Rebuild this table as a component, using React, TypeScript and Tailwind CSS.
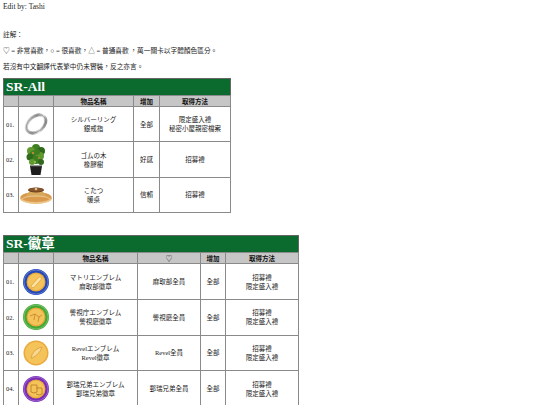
import React from "react";

const serif = "font-['Liberation_Serif','Noto_Sans_CJK_TC',serif]";

function Ring() {
  return (
    <svg width="26" height="26" viewBox="0 0 26 26">
      <defs>
        <linearGradient id="rg" x1="0" y1="0" x2="1" y2="1">
          <stop offset="0" stopColor="#f4f4f4" />
          <stop offset="0.45" stopColor="#9a9a9a" />
          <stop offset="0.7" stopColor="#e8e8e8" />
          <stop offset="1" stopColor="#555" />
        </linearGradient>
      </defs>
      <g transform="rotate(-40 13 13)">
        <ellipse cx="13" cy="13" rx="11" ry="7.5" fill="none" stroke="url(#rg)" strokeWidth="3.2" />
        <ellipse cx="13" cy="13" rx="11" ry="7.5" fill="none" stroke="#6b6b6b" strokeWidth="0.5" />
      </g>
    </svg>
  );
}

function Plant() {
  const leaves = [
    [13, 5, 4], [8, 8, 4], [18, 8, 4], [11, 12, 4.5], [17, 13, 4], [7, 14, 3.5],
    [13, 17, 4], [9, 19, 3], [18, 19, 3], [14, 9, 3],
  ];
  return (
    <svg width="26" height="34" viewBox="0 0 26 34">
      {leaves.map(([x, y, r], i) => (
        <circle key={i} cx={x} cy={y} r={r} fill={i % 3 === 0 ? "#3f7f22" : i % 3 === 1 ? "#5f9a2e" : "#2f6a1c"} />
      ))}
      <circle cx="10" cy="10" r="1.2" fill="#b98a3a" />
      <circle cx="16" cy="15" r="1" fill="#b98a3a" />
      <circle cx="12" cy="19" r="1" fill="#a3c45a" />
      <path d="M7 23 H19 L17.5 32 H8.5 Z" fill="#1e1e1e" />
      <rect x="7" y="22.5" width="12" height="1.6" fill="#3a3a3a" />
    </svg>
  );
}

function Kotatsu() {
  return (
    <svg width="34" height="24" viewBox="0 0 34 24">
      <ellipse cx="17" cy="15" rx="16" ry="6" fill="#e8b46e" />
      <ellipse cx="17" cy="14" rx="15" ry="5" fill="#d99a4e" />
      <path d="M7 14 Q9 7 17 6 Q25 7 27 14 Z" fill="#d8a85c" />
      <ellipse cx="17" cy="7" rx="8" ry="2.6" fill="#6b3e1c" />
      <ellipse cx="17" cy="6.6" rx="7" ry="1.9" fill="#8a5428" />
      <circle cx="17" cy="6" r="1.3" fill="#d8c8a0" />
      <ellipse cx="17" cy="16.5" rx="14" ry="3.5" fill="none" stroke="#f3d7a5" strokeWidth="0.7" />
    </svg>
  );
}

function Badge({ ring, mark }: { ring: string | null; mark: number }) {
  return (
    <svg width="28" height="28" viewBox="0 0 28 28">
      {ring && <circle cx="14" cy="14" r="13" fill={ring} />}
      {ring && <circle cx="14" cy="14" r="12" fill="none" stroke="#ffffff" strokeOpacity="0.25" strokeWidth="1" />}
      <circle cx="14" cy="14" r={ring ? 9.5 : 12.5} fill="#e9a93c" />
      <circle cx="14" cy="14" r={ring ? 8.3 : 11} fill="#f4c35a" />
      {mark === 0 && <path d="M9 18 L17 9 Q20 8 19.5 11 L12 19.5 Q9 20.5 9 18 Z" fill="#fbe3a4" stroke="#d9962c" strokeWidth="0.6" />}
      {mark === 1 && <path d="M8 13 L13 11 L17 14 L20 12 M13 11 L12 17 M17 14 L16 19" fill="none" stroke="#c48327" strokeWidth="0.8" />}
      {mark === 2 && <path d="M9 19 Q11 10 20 8 Q18 15 10 19 Z" fill="#f8d88e" stroke="#d28e2a" strokeWidth="0.6" />}
      {mark === 3 && (
        <g fill="none" stroke="#b87a22" strokeWidth="0.8">
          <path d="M9 10 H15 V17 Q12 19 9 17 Z" />
          <path d="M14 13 H20 V19 Q17 21 14 19" />
        </g>
      )}
    </svg>
  );
}

function Title({ children, span }: { children: React.ReactNode; span: number }) {
  return (
    <tr>
      <td colSpan={span} className="h-[16px] bg-[#0b6b2f] px-[2px] py-0 text-[13.5px] font-bold leading-[16px] text-white">
        {children}
      </td>
    </tr>
  );
}

const th = "h-[11px] border border-[#8a8a8a] bg-[#c6c6c6] p-0 text-center text-[6.5px] font-bold leading-[9px] text-[#111]";
const td = "border border-[#8a8a8a] p-0 text-center text-[6.5px] leading-[9px] text-[#1a1a1a]";

export default function App() {
  const all = [
    { img: <Ring />, name: ["シルバーリング", "銀戒指"], add: "全部", get: ["限定盛入禮", "秘密小屋親密檔案"] },
    { img: <Plant />, name: ["ゴムの木", "橡膠樹"], add: "好感", get: ["招募禮"] },
    { img: <Kotatsu />, name: ["こたつ", "暖桌"], add: "信賴", get: ["招募禮"] },
  ];
  const badges = [
    { img: <Badge ring="#2447b8" mark={0} />, name: ["マトリエンブレム", "麻取部徽章"], heart: "麻取部全員" },
    { img: <Badge ring="#43a834" mark={1} />, name: ["警視庁エンブレム", "警視廳徽章"], heart: "警視廳全員" },
    { img: <Badge ring={null} mark={2} />, name: ["Revelエンブレム", "Revel徽章"], heart: "Revel全員" },
    { img: <Badge ring="#7a2bb8" mark={3} />, name: ["郵瑞兄弟エンブレム", "郵瑞兄弟徽章"], heart: "郵瑞兄弟全員" },
  ];

  return (
    <div className={`${serif} min-h-[405px] bg-white px-[3px] text-[#222]`}>
      <p className="text-[7.5px] font-normal leading-[14px] text-[#222]">Edit by: Tashi</p>
      <div className="mt-[13px] text-[6.7px] leading-[16px]">
        <p>註解：</p>
        <p>♡ = 非常喜歡，○ = 很喜歡，△ = 普通喜歡 ，萬一關卡以字體顏色區分。</p>
        <p>若沒有中文翻譯代表繁中仍未實裝，反之亦言。</p>
      </div>

      <table className="mt-[3px] w-[227px] table-fixed border-collapse border border-[#666]">
        <colgroup>
          <col className="w-[15px]" />
          <col className="w-[35px]" />
          <col className="w-[80px]" />
          <col className="w-[26px]" />
          <col className="w-[71px]" />
        </colgroup>
        <tbody>
          <Title span={5}>SR-All</Title>
          <tr>
            <th className={th}></th>
            <th className={th}></th>
            <th className={th}>物品名稱</th>
            <th className={th}>增加</th>
            <th className={th}>取得方法</th>
          </tr>
          {all.map((r, i) => (
            <tr key={i} className="h-[35.4px]">
              <td className={`${td} !text-left pl-[2px]`}>0{i + 1}.</td>
              <td className={td}>
                <div className="flex items-center justify-center">{r.img}</div>
              </td>
              <td className={td}>
                {r.name.map((n) => (
                  <div key={n}>{n}</div>
                ))}
              </td>
              <td className={td}>{r.add}</td>
              <td className={td}>
                {r.get.map((n) => (
                  <div key={n}>{n}</div>
                ))}
              </td>
            </tr>
          ))}
        </tbody>
      </table>

      <table className="mt-[22px] w-[295px] table-fixed border-collapse border border-[#666]">
        <colgroup>
          <col className="w-[15px]" />
          <col className="w-[35px]" />
          <col className="w-[84px]" />
          <col className="w-[63px]" />
          <col className="w-[25px]" />
          <col className="w-[73px]" />
        </colgroup>
        <tbody>
          <Title span={6}>SR-徽章</Title>
          <tr>
            <th className={th}></th>
            <th className={th}></th>
            <th className={th}>物品名稱</th>
            <th className={`${th} !font-normal`}>♡</th>
            <th className={th}>增加</th>
            <th className={th}>取得方法</th>
          </tr>
          {badges.map((r, i) => (
            <tr key={i} className="h-[35.7px]">
              <td className={`${td} !text-left pl-[2px]`}>0{i + 1}.</td>
              <td className={td}>
                <div className="flex items-center justify-center">{r.img}</div>
              </td>
              <td className={td}>
                {r.name.map((n) => (
                  <div key={n}>{n}</div>
                ))}
              </td>
              <td className={td}>{r.heart}</td>
              <td className={td}>全部</td>
              <td className={td}>
                <div>招募禮</div>
                <div>限定盛入禮</div>
              </td>
            </tr>
          ))}
        </tbody>
      </table>
    </div>
  );
}
